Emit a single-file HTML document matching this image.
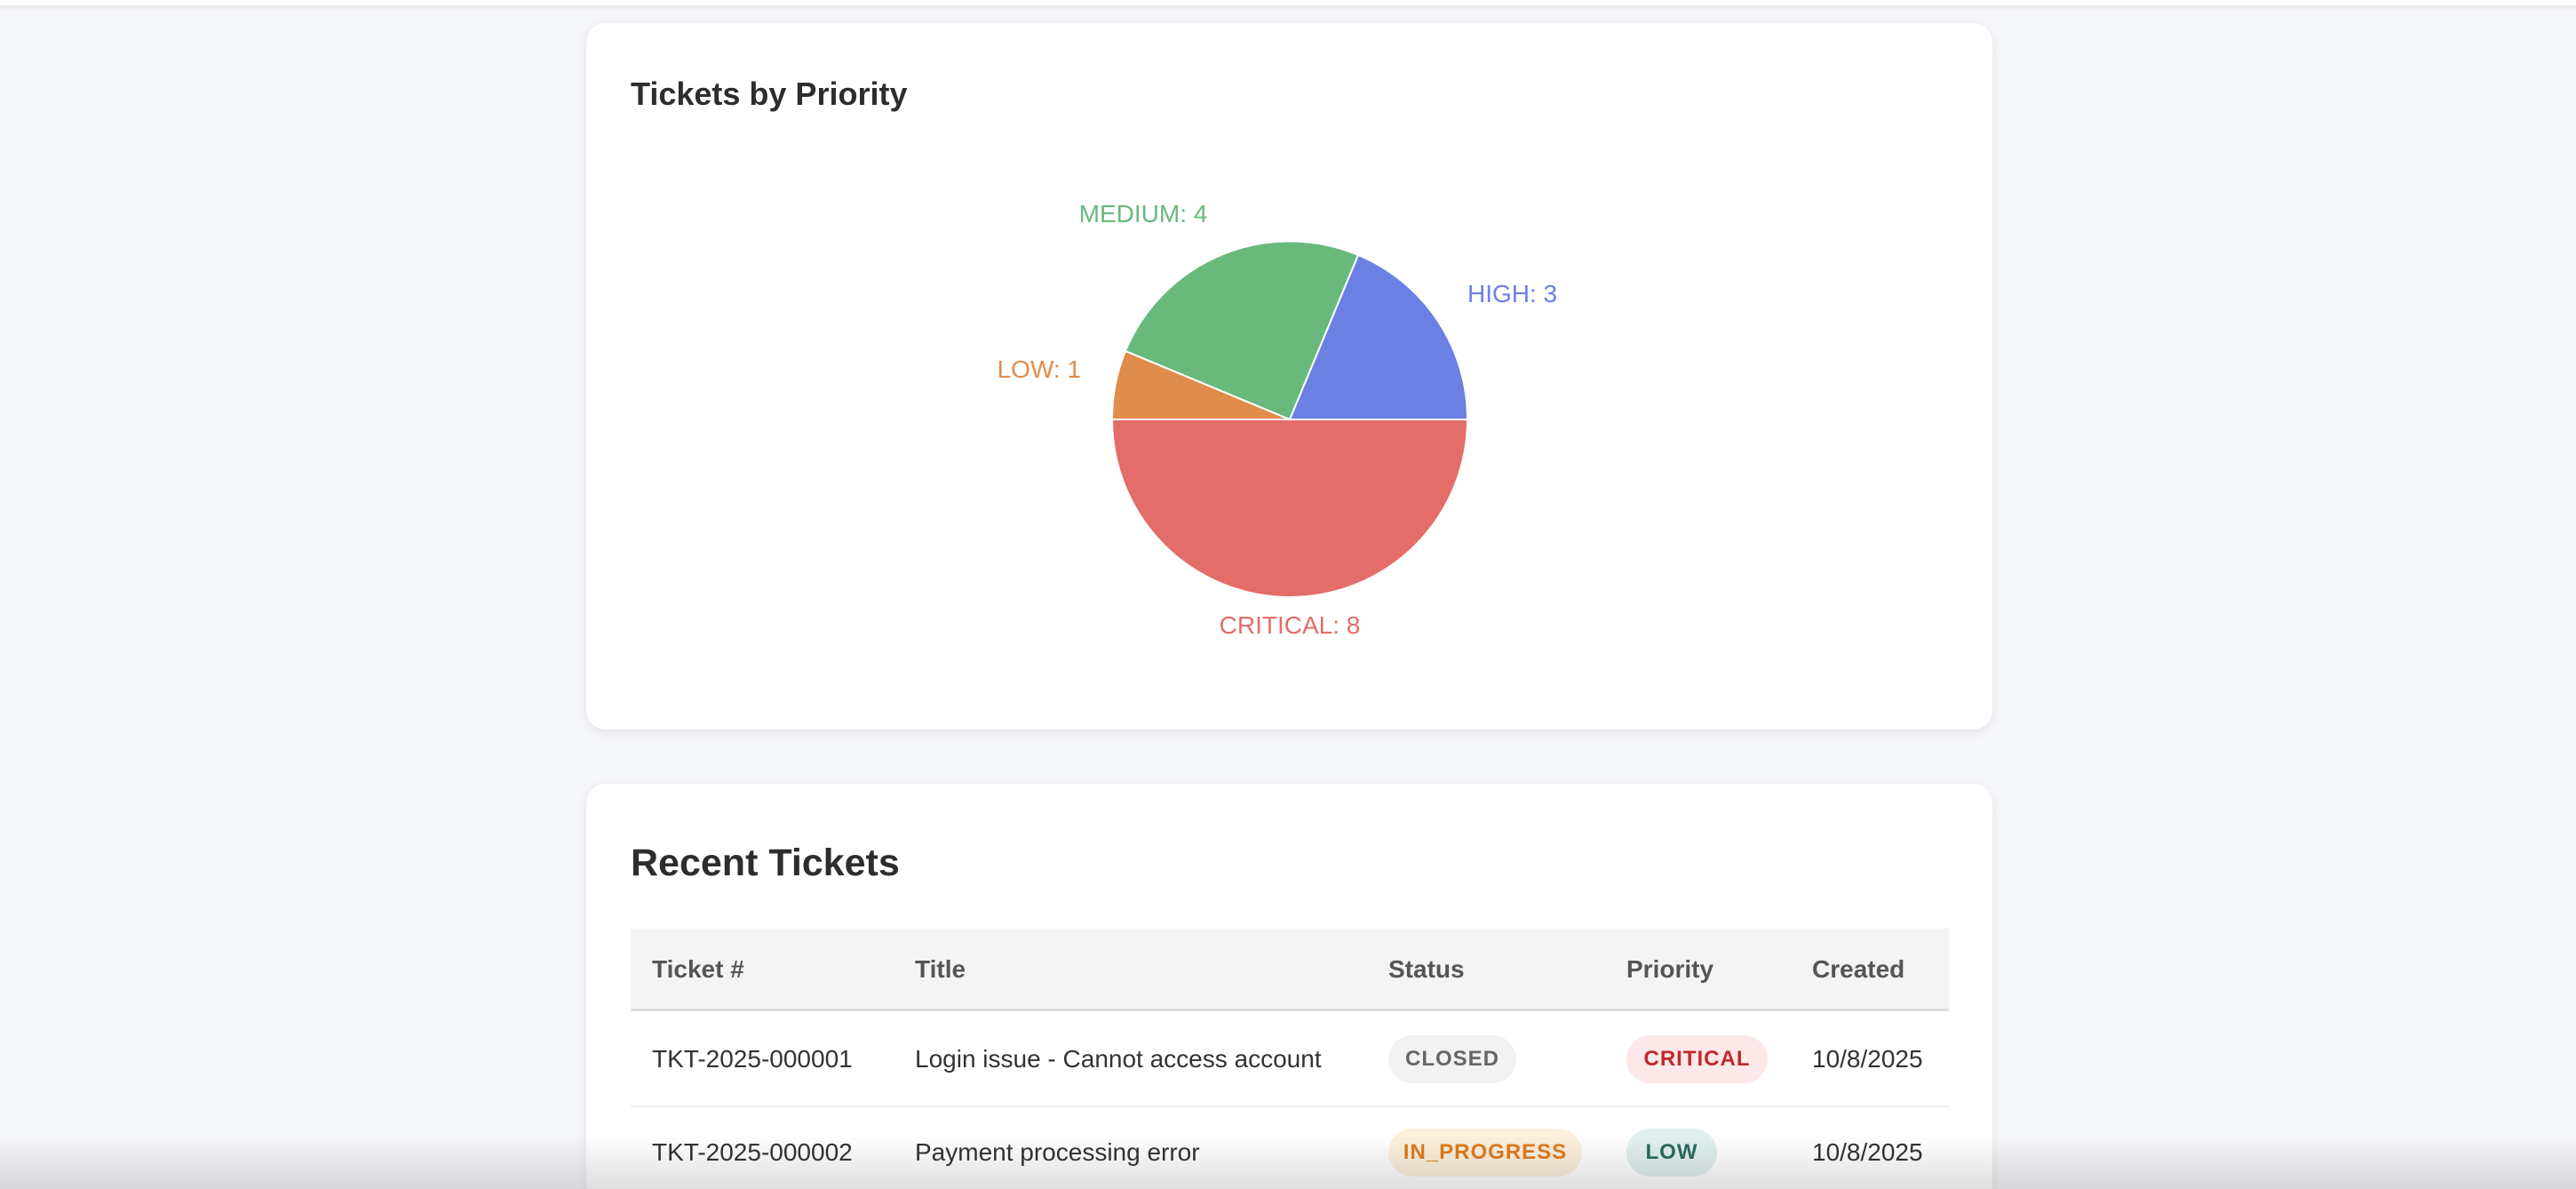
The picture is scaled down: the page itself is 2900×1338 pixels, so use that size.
<!DOCTYPE html>
<html><head><meta charset="utf-8"><style>
*{margin:0;padding:0;box-sizing:border-box}
html,body{width:2900px;height:1338px;overflow:hidden;background:#f5f6fa;font-family:"Liberation Sans",sans-serif;position:relative}
.topbar{position:absolute;left:0;top:0;width:2900px;height:6px;background:#fff;box-shadow:0 2px 6px rgba(0,0,0,.08)}
.card{position:absolute;left:660px;width:1583px;background:#fff;border-radius:22px;box-shadow:0 3px 12px rgba(0,0,0,.08)}
h3{position:absolute;left:50px;font-size:36px;font-weight:bold;color:#2d2d2d}
h2{position:absolute;left:50px;font-size:43px;font-weight:bold;color:#2d2d2d}
.th{position:absolute;left:50px;top:163px;width:1484px;height:93px;background:#f4f4f4;border-bottom:3px solid #ddd}
.t{position:absolute;font-size:28px;color:#333;transform:translateY(-50%);white-space:nowrap}
.h{color:#555;font-weight:bold}
.b{position:absolute;height:54px;line-height:54px;border-radius:27px;font-size:24px;font-weight:bold;letter-spacing:1px;text-align:center;transform:translateY(-50%)}
.shade{position:absolute;left:0;bottom:0;width:2900px;height:60px;background:linear-gradient(rgba(0,0,0,0),rgba(0,0,0,.13))}
</style></head><body>
<div class="topbar"></div>
<div class="card" style="top:26px;height:795px">
<h3 style="top:59px">Tickets by Priority</h3>
</div>
<svg style="position:absolute;left:0;top:0" width="2900" height="900">
<g stroke="#fff" stroke-width="2">
<path d="M1452 472 L1652 472 A200 200 0 0 1 1252 472 Z" fill="#e46d69"/>
<path d="M1452 472 L1252 472 A200 200 0 0 1 1267 395 Z" fill="#e08c4a"/>
<path d="M1452 472 L1267 395 A200 200 0 0 1 1529 287 Z" fill="#69b97d"/>
<path d="M1452 472 L1529 287 A200 200 0 0 1 1652 472 Z" fill="#6b80e2"/>
</g>
<g font-family="Liberation Sans, sans-serif" font-size="28">
<text x="1287" y="250" fill="#69b97d" text-anchor="middle">MEDIUM: 4</text>
<text x="1652" y="340" fill="#6b80e2">HIGH: 3</text>
<text x="1217" y="425" fill="#e08c4a" text-anchor="end">LOW: 1</text>
<text x="1452" y="713" fill="#e46d69" text-anchor="middle">CRITICAL: 8</text>
</g>
</svg>
<div class="card" style="top:882px;height:500px">
<h2 style="top:65px">Recent Tickets</h2>
<div class="th"></div>
<div style="position:absolute;left:50px;top:362px;width:1484px;height:2px;background:#eee"></div>
</div>
<div class="t h" style="left:734px;top:1091px">Ticket #</div>
<div class="t h" style="left:1030px;top:1091px">Title</div>
<div class="t h" style="left:1563px;top:1091px">Status</div>
<div class="t h" style="left:1831px;top:1091px">Priority</div>
<div class="t h" style="left:2040px;top:1091px">Created</div>
<div class="t" style="left:734px;top:1192px">TKT-2025-000001</div>
<div class="t" style="left:1030px;top:1192px">Login issue - Cannot access account</div>
<div class="b" style="left:1563px;top:1192px;width:144px;background:#f2f2f2;color:#666">CLOSED</div>
<div class="b" style="left:1831px;top:1192px;width:159px;background:#fce8e9;color:#c0282d">CRITICAL</div>
<div class="t" style="left:2040px;top:1192px">10/8/2025</div>
<div class="t" style="left:734px;top:1297px">TKT-2025-000002</div>
<div class="t" style="left:1030px;top:1297px">Payment processing error</div>
<div class="b" style="left:1563px;top:1297px;width:218px;background:#fcf0dc;color:#e07b1f">IN_PROGRESS</div>
<div class="b" style="left:1831px;top:1297px;width:102px;background:#e0f0ee;color:#2a6b5e">LOW</div>
<div class="t" style="left:2040px;top:1297px">10/8/2025</div>
<div class="shade"></div>
</body></html>
